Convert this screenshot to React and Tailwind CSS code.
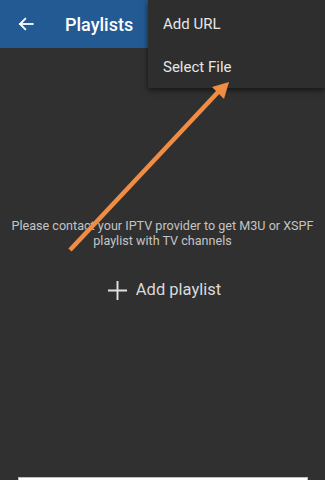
import React from "react";

function BackArrow() {
  return (
    <svg width="18" height="18" viewBox="0 0 24 24" fill="none" stroke="white" strokeWidth="2.4" strokeLinecap="square">
      <path d="M21 12H4" />
      <path d="M11 5l-7 7 7 7" />
    </svg>
  );
}

function PlusIcon() {
  return (
    <svg width="21" height="21" viewBox="0 0 22 22" stroke="#e0e0e0" strokeWidth="2">
      <path d="M11 1v20M1 11h20" />
    </svg>
  );
}

export default function App() {
  return (
    <div
      className="relative w-[325px] h-[480px] overflow-hidden bg-[#303030] flex flex-col"
      style={{ fontFamily: "Roboto, 'Liberation Sans', sans-serif" }}
    >
      <div className="h-[48px] bg-[#245a93] flex items-center shrink-0">
        <div className="w-[65px] pl-[17px] flex items-center">
          <BackArrow />
        </div>
        <h1 className="text-white text-[18px] font-medium">Playlists</h1>
      </div>

      <div className="flex-1 flex flex-col items-center">
        <p className="mt-[170px] px-2 text-center text-[12.6px] leading-[15px] text-[#c4c4c4]">
          Please contact your IPTV provider to get M3U or XSPF playlist with TV channels
        </p>
        <button className="mt-[30px] ml-[3px] flex items-center gap-[8px] text-[16.5px] text-[#dadada]">
          <PlusIcon />
          <span>Add playlist</span>
        </button>
      </div>

      <div className="h-[3px] mx-[18px] w-[290px] bg-white border-t border-l border-r border-[#bdbdbd] shrink-0" />

      <div className="absolute top-0 left-[148px] w-[177px] h-[88px] bg-[#2e2e2e] shadow-[0_2px_6px_rgba(0,0,0,0.6)] flex flex-col text-[15px] text-[#e6e6e6]">
        <div className="h-[44px] flex items-center pl-[15px] pt-[5px]">Add URL</div>
        <div className="h-[44px] flex items-center pl-[15px] pt-[2px]">Select File</div>
      </div>

      <svg className="absolute left-0 top-0 pointer-events-none" width="325" height="480">
        <line x1="70" y1="250" x2="220" y2="90" stroke="#f08d45" strokeWidth="4.5" />
        <polygon points="229,82 212,87 224,99" fill="#f08d45" />
      </svg>
    </div>
  );
}
